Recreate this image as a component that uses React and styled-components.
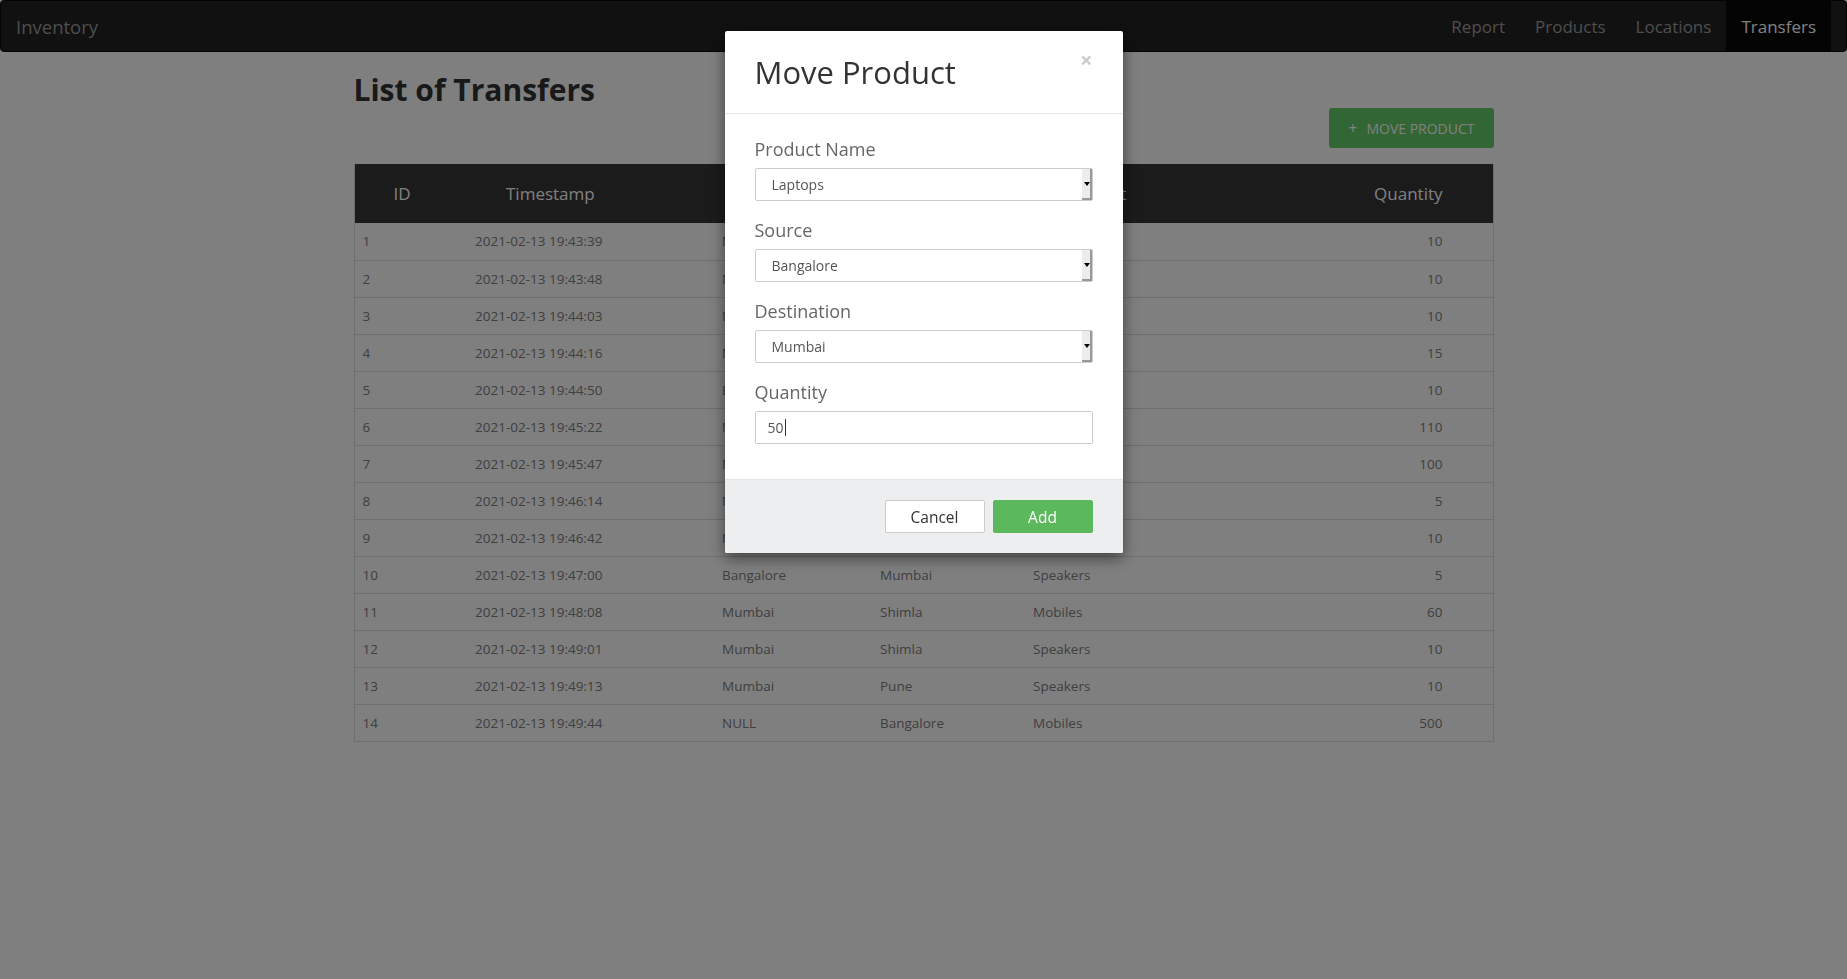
import React from 'react'
import styled, { createGlobalStyle } from 'styled-components'

const GlobalStyle = createGlobalStyle`
    html, body {
        margin: 0;
        padding: 0;
        background: #fff;
        font-family: "Open Sans", "Liberation Sans", sans-serif;
        color: #333;
    }
    * { box-sizing: border-box; }
`

const transfers = [
    { id: 1, ts: '2021-02-13 19:43:39', from: 'Mumbai', to: 'Pune', product: 'Laptops', qty: 10 },
    { id: 2, ts: '2021-02-13 19:43:48', from: 'Mumbai', to: 'Shimla', product: 'Laptops', qty: 10 },
    { id: 3, ts: '2021-02-13 19:44:03', from: 'Mumbai', to: 'Bangalore', product: 'Mobiles', qty: 10 },
    { id: 4, ts: '2021-02-13 19:44:16', from: 'Mumbai', to: 'Pune', product: 'Mobiles', qty: 15 },
    { id: 5, ts: '2021-02-13 19:44:50', from: 'Bangalore', to: 'Shimla', product: 'Laptops', qty: 10 },
    { id: 6, ts: '2021-02-13 19:45:22', from: 'NULL', to: 'Mumbai', product: 'Speakers', qty: 110 },
    { id: 7, ts: '2021-02-13 19:45:47', from: 'NULL', to: 'Bangalore', product: 'Laptops', qty: 100 },
    { id: 8, ts: '2021-02-13 19:46:14', from: 'Mumbai', to: 'Pune', product: 'Speakers', qty: 5 },
    { id: 9, ts: '2021-02-13 19:46:42', from: 'Mumbai', to: 'Shimla', product: 'Mobiles', qty: 10 },
    { id: 10, ts: '2021-02-13 19:47:00', from: 'Bangalore', to: 'Mumbai', product: 'Speakers', qty: 5 },
    { id: 11, ts: '2021-02-13 19:48:08', from: 'Mumbai', to: 'Shimla', product: 'Mobiles', qty: 60 },
    { id: 12, ts: '2021-02-13 19:49:01', from: 'Mumbai', to: 'Shimla', product: 'Speakers', qty: 10 },
    { id: 13, ts: '2021-02-13 19:49:13', from: 'Mumbai', to: 'Pune', product: 'Speakers', qty: 10 },
    { id: 14, ts: '2021-02-13 19:49:44', from: 'NULL', to: 'Bangalore', product: 'Mobiles', qty: 500 },
]

const App = () => {
    return (
        <>
            <GlobalStyle />
            <Navbar>
                <Brand>Inventory</Brand>
                <NavLinks>
                    <NavLink>Report</NavLink>
                    <NavLink>Products</NavLink>
                    <NavLink>Locations</NavLink>
                    <NavLink active>Transfers</NavLink>
                </NavLinks>
            </Navbar>
            <Container>
                <Title>List of Transfers</Title>
                <Actions>
                    <MoveButton><span>+</span>MOVE PRODUCT</MoveButton>
                </Actions>
                <Table>
                    <thead>
                        <tr>
                            <Th style={{ width: 113 }}>ID</Th>
                            <Th style={{ width: 247 }}>Timestamp</Th>
                            <Th style={{ width: 158 }}>Source</Th>
                            <Th style={{ width: 153 }}>Destination</Th>
                            <Th>Product</Th>
                            <Th right>Quantity</Th>
                        </tr>
                    </thead>
                    <tbody>
                        {transfers.map(t => (
                            <tr key={t.id}>
                                <Td>{t.id}</Td>
                                <Td>{t.ts}</Td>
                                <Td>{t.from}</Td>
                                <Td>{t.to}</Td>
                                <Td>{t.product}</Td>
                                <Td right>{t.qty}</Td>
                            </tr>
                        ))}
                    </tbody>
                </Table>
            </Container>

            <Backdrop />
            <ModalWrap>
                <Dialog>
                    <ModalHeader>
                        <ModalTitle>Move Product</ModalTitle>
                        <Close>×</Close>
                    </ModalHeader>
                    <ModalBody>
                        <Group>
                            <Label>Product Name</Label>
                            <Select>Laptops<Arrow /></Select>
                        </Group>
                        <Group>
                            <Label>Source</Label>
                            <Select>Bangalore<Arrow /></Select>
                        </Group>
                        <Group>
                            <Label>Destination</Label>
                            <Select>Mumbai<Arrow /></Select>
                        </Group>
                        <Group>
                            <Label>Quantity</Label>
                            <Input>50<Caret /></Input>
                        </Group>
                    </ModalBody>
                    <ModalFooter>
                        <Button>Cancel</Button>
                        <Button primary>Add</Button>
                    </ModalFooter>
                </Dialog>
            </ModalWrap>
        </>
    )
}

export default App

const Navbar = styled.nav`
    display: flex;
    justify-content: space-between;
    align-items: stretch;
    height: 52px;
    background: #222;
    border: 1px solid #080808;
    border-radius: 4px;
    padding: 0 15px;
`

const Brand = styled.div`
    display: flex;
    align-items: center;
    font-size: 18.5px;
    color: #9d9d9d;
`

const NavLinks = styled.div`
    display: flex;
`

const NavLink = styled.div`
    display: flex;
    align-items: center;
    padding: 0 15px;
    font-size: 17px;
    color: ${p => (p.active ? '#fff' : '#9d9d9d')};
    background: ${p => (p.active ? '#080808' : 'transparent')};
`

const Container = styled.div`
    width: 1140px;
    margin: 0 auto;
`

const Title = styled.h2`
    margin: 20px 0 0;
    font-size: 30px;
    line-height: 36px;
    font-weight: 700;
    color: #333;
`

const Actions = styled.div`
    display: flex;
    justify-content: flex-end;
`

const MoveButton = styled.button`
    display: flex;
    align-items: center;
    gap: 9px;
    height: 40px;
    padding: 0 19px;
    border: none;
    border-radius: 3px;
    background: #66cc6a;
    color: #fff;
    font-family: inherit;
    font-size: 14px;
    span { font-size: 16px; }
`

const Table = styled.table`
    width: 100%;
    margin-top: 16px;
    border-collapse: collapse;
    border: 1px solid #ddd;
    border-top: none;
`

const Th = styled.th`
    height: 59px;
    background: #363636;
    color: #fff;
    font-size: 17px;
    font-weight: 400;
    text-align: ${p => (p.right ? 'right' : 'left')};
    padding: ${p => (p.right ? '0 50px 0 8px' : '0 8px 0 39px')};
`

const Td = styled.td`
    height: 37px;
    padding: ${p => (p.right ? '0 50px 0 8px' : '0 8px')};
    border-bottom: 1px solid #ddd;
    font-size: 13.5px;
    color: #808080;
    text-align: ${p => (p.right ? 'right' : 'left')};
`

const Backdrop = styled.div`
    position: fixed;
    inset: 0;
    background: rgba(0, 0, 0, 0.5);
`

const ModalWrap = styled.div`
    position: fixed;
    inset: 0;
    padding-top: 31px;
`

const Dialog = styled.div`
    width: 398px;
    margin: 0 auto;
    background: #fff;
    border-radius: 2px;
    box-shadow: 0 5px 15px rgba(0, 0, 0, 0.5);
    overflow: hidden;
`

const ModalHeader = styled.div`
    display: flex;
    justify-content: space-between;
    align-items: flex-start;
    height: 83px;
    padding: 21px 30px 0 30px;
    border-bottom: 1px solid #e5e5e5;
`

const ModalTitle = styled.h4`
    margin: 0;
    font-size: 31px;
    line-height: 40px;
    font-weight: 500;
    color: #333;
`

const Close = styled.span`
    font-size: 22px;
    font-weight: 700;
    line-height: 1;
    color: #000;
    opacity: 0.2;
    margin-top: -4px;
`

const ModalBody = styled.div`
    display: flex;
    flex-direction: column;
    gap: 16px;
    padding: 22px 30px 35px;
`

const Group = styled.div`
    display: flex;
    flex-direction: column;
    gap: 6px;
`

const Label = styled.label`
    font-size: 18px;
    line-height: 26px;
    color: #666;
`

const Field = styled.div`
    position: relative;
    display: flex;
    align-items: center;
    height: 33px;
    border: 1px solid #ccc;
    border-radius: 2px;
    font-size: 14px;
    color: #555;
`

const Select = styled(Field)`
    padding-left: 16px;
`

const Input = styled(Field)`
    padding-left: 12px;
`

const Arrow = styled.span`
    position: absolute;
    right: 0;
    top: 0;
    bottom: 0;
    width: 10px;
    background: #ececec;
    border-right: 2px solid #999;
    border-bottom: 2px solid #999;
    &::after {
        content: '';
        position: absolute;
        left: 2px;
        top: 13px;
        border-left: 3px solid transparent;
        border-right: 3px solid transparent;
        border-top: 4px solid #000;
    }
`

const Caret = styled.span`
    display: inline-block;
    width: 1px;
    height: 17px;
    background: #333;
    margin-left: 1px;
`

const ModalFooter = styled.div`
    display: flex;
    justify-content: flex-end;
    gap: 8px;
    padding: 20px 30px;
    background: #eceeef;
    border-top: 1px solid #e5e5e5;
`

const Button = styled.button`
    width: 100px;
    height: 33px;
    border-radius: 2px;
    border: 1px solid ${p => (p.primary ? '#5cb85c' : '#ccc')};
    background: ${p => (p.primary ? '#5cb85c' : '#fff')};
    color: ${p => (p.primary ? '#fff' : '#333')};
    font-family: inherit;
    font-size: 15.5px;
`
